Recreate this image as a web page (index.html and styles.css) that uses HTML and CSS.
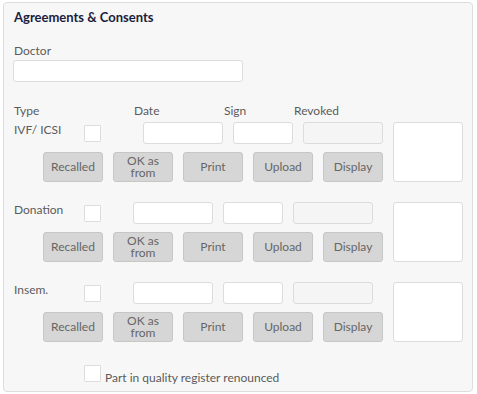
FILE: index.html
```html
<!DOCTYPE html>
<html>
<head>
<meta charset="utf-8">
<link rel="stylesheet" href="styles.css">
</head>
<body>
<div class="panel">
  <div class="title">Agreements &amp; Consents</div>
  <div class="field-label">Doctor</div>
  <input class="doctor" type="text">

  <div class="head">
    <span class="h-type">Type</span>
    <span class="h-date">Date</span>
    <span class="h-sign">Sign</span>
    <span class="h-rev">Revoked</span>
  </div>

  <div class="row">
    <div class="left">
      <div class="line line-first">
        <span class="rlabel">IVF/ ICSI</span>
        <span class="check"></span>
        <input class="in date" type="text">
        <input class="in sign" type="text">
        <input class="in rev" type="text" disabled>
      </div>
      <div class="buttons">
        <button class="btn">Recalled</button>
        <button class="btn two">OK as<br>from</button>
        <button class="btn">Print</button>
        <button class="btn">Upload</button>
        <button class="btn">Display</button>
      </div>
    </div>
    <div class="box"></div>
  </div>

  <div class="row">
    <div class="left">
      <div class="line">
        <span class="rlabel">Donation</span>
        <span class="check"></span>
        <input class="in date" type="text">
        <input class="in sign" type="text">
        <input class="in rev" type="text" disabled>
      </div>
      <div class="buttons">
        <button class="btn">Recalled</button>
        <button class="btn two">OK as<br>from</button>
        <button class="btn">Print</button>
        <button class="btn">Upload</button>
        <button class="btn">Display</button>
      </div>
    </div>
    <div class="box"></div>
  </div>

  <div class="row">
    <div class="left">
      <div class="line">
        <span class="rlabel">Insem.</span>
        <span class="check"></span>
        <input class="in date" type="text">
        <input class="in sign" type="text">
        <input class="in rev" type="text" disabled>
      </div>
      <div class="buttons">
        <button class="btn">Recalled</button>
        <button class="btn two">OK as<br>from</button>
        <button class="btn">Print</button>
        <button class="btn">Upload</button>
        <button class="btn">Display</button>
      </div>
    </div>
    <div class="box"></div>
  </div>

  <div class="footer">
    <span class="check"></span>
    <span class="footer-text">Part in quality register renounced</span>
  </div>
</div>
</body>
</html>
```

FILE: styles.css
```css
* { box-sizing: border-box; }
html, body { margin: 0; padding: 0; background: #ffffff; }
body {
  font-family: Lato, "Open Sans", sans-serif;
  font-size: 12px;
  color: #5b5b5b;
}
.panel {
  margin: 2px 0 0 3px;
  width: 470px;
  height: 390px;
  background: #f7f7f7;
  border: 1px solid #dddddd;
  border-radius: 4px;
  padding: 6px 0 0 9px;
}
.title {
  font-size: 13px;
  font-weight: bold;
  line-height: 16px;
  color: #1b1d3d;
  padding-left: 1px;
}
.field-label {
  margin-top: 18px;
  line-height: 15px;
  padding-left: 1px;
}
.doctor {
  display: block;
  margin-top: 2px;
  width: 230px;
  height: 22px;
  border: 1px solid #dcdcdc;
  border-radius: 3px;
  background: #fff;
  outline: none;
}
.head {
  display: flex;
  margin-top: 21px;
  line-height: 15px;
}
.head span { display: block; padding-left: 1px; }
.h-type { width: 120px; }
.h-date { width: 90px; }
.h-sign { width: 70px; }
.row {
  display: flex;
  gap: 10px;
  margin-top: 4px;
}
.row + .row { margin-top: 20px; }
.left { width: 370px; }
.line {
  display: flex;
  align-items: center;
  height: 22px;
}
.rlabel {
  width: 71px;
  align-self: flex-start;
  line-height: 16px;
  padding-left: 1px;
}
.check {
  display: block;
  width: 17px;
  height: 17px;
  background: #fff;
  border: 1px solid #dddddd;
  border-radius: 1px;
  flex: none;
}
.in {
  height: 22px;
  border: 1px solid #dcdcdc;
  border-radius: 3px;
  background: #fff;
  outline: none;
  padding: 0;
  margin: 0;
}
.date { width: 80px; margin-left: 32px; }
.line-first .date { margin-left: 42px; }
.sign { width: 60px; margin-left: 10px; }
.rev { width: 80px; margin-left: 10px; background: #f5f5f5; }
.buttons {
  display: flex;
  gap: 10px;
  padding-left: 30px;
  margin-top: 8px;
}
.btn {
  width: 60px;
  height: 30px;
  margin: 0;
  padding: 0;
  background: #d6d6d6;
  border: 1px solid #c6c6c6;
  border-radius: 3px;
  font-family: Lato, "Open Sans", sans-serif;
  font-size: 12px;
  color: #666666;
  line-height: 14px;
}
.btn.two { line-height: 12px; }
.box {
  width: 70px;
  height: 60px;
  background: #fff;
  border: 1px solid #dcdcdc;
  border-radius: 3px;
}
.footer {
  display: flex;
  align-items: flex-end;
  margin-top: 23px;
  padding-left: 71px;
}
.footer-text {
  margin-left: 4px;
  line-height: 15px;
  margin-bottom: -3px;
}
```
